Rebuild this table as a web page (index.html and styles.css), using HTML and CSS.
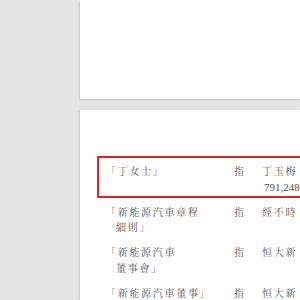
FILE: index.html
```html
<!DOCTYPE html>
<html lang="zh-Hant">
<head>
<meta charset="utf-8">
<link rel="stylesheet" href="styles.css">
</head>
<body>
<div class="viewer">
  <div class="page page-top"></div>
  <div class="page page-main">
    <div class="defs">
      <div class="row highlighted">
        <div class="term">「丁女士」</div>
        <div class="means">指</div>
        <div class="def">丁玉梅<br><span class="num">791,248</span></div>
      </div>
      <div class="row">
        <div class="term">「新能源汽車章程<br><span class="indent">細則」</span></div>
        <div class="means">指</div>
        <div class="def">經不時</div>
      </div>
      <div class="row">
        <div class="term">「新能源汽車<br><span class="indent">董事會」</span></div>
        <div class="means">指</div>
        <div class="def">恒大新</div>
      </div>
      <div class="row">
        <div class="term">「新能源汽車董事」</div>
        <div class="means">指</div>
        <div class="def">恒大新</div>
      </div>
    </div>
  </div>
</div>
</body>
</html>
```

FILE: styles.css
```css
html, body {
  margin: 0;
  padding: 0;
  width: 300px;
  height: 300px;
  overflow: hidden;
  background: #e5e5e5;
}

.viewer {
  display: flex;
  flex-direction: column;
  gap: 11px;
  padding-left: 80px;
  width: 300px;
  height: 300px;
  box-sizing: border-box;
}

.page {
  background: #ffffff;
  box-shadow: -1px 1px 2px rgba(0, 0, 0, 0.14);
}

.page-top {
  height: 99px;
  flex: none;
}

.page-main {
  flex: 1;
  min-height: 0;
  overflow: hidden;
  padding: 54px 0 0 26px;
  box-sizing: border-box;
}

.defs {
  display: flex;
  flex-direction: column;
  gap: 9.5px;
  width: 280px;
  font-family: "Liberation Serif", "Noto Serif CJK TC", "Noto Sans CJK TC", serif;
  font-size: 10px;
  line-height: 15.5px;
  letter-spacing: 1.7px;
  color: #555555;
}

.row {
  position: relative;
  display: grid;
  grid-template-columns: 128px 28px 1fr;
  min-height: 31px;
}

.highlighted::before {
  content: "";
  position: absolute;
  top: -8px;
  bottom: -3px;
  left: -9px;
  right: -20px;
  border: 2px solid #e8231e;
}

.indent {
  padding-left: 10px;
}

.num {
  font-size: 11px;
  letter-spacing: 0;
  padding-left: 2px;
}
```
